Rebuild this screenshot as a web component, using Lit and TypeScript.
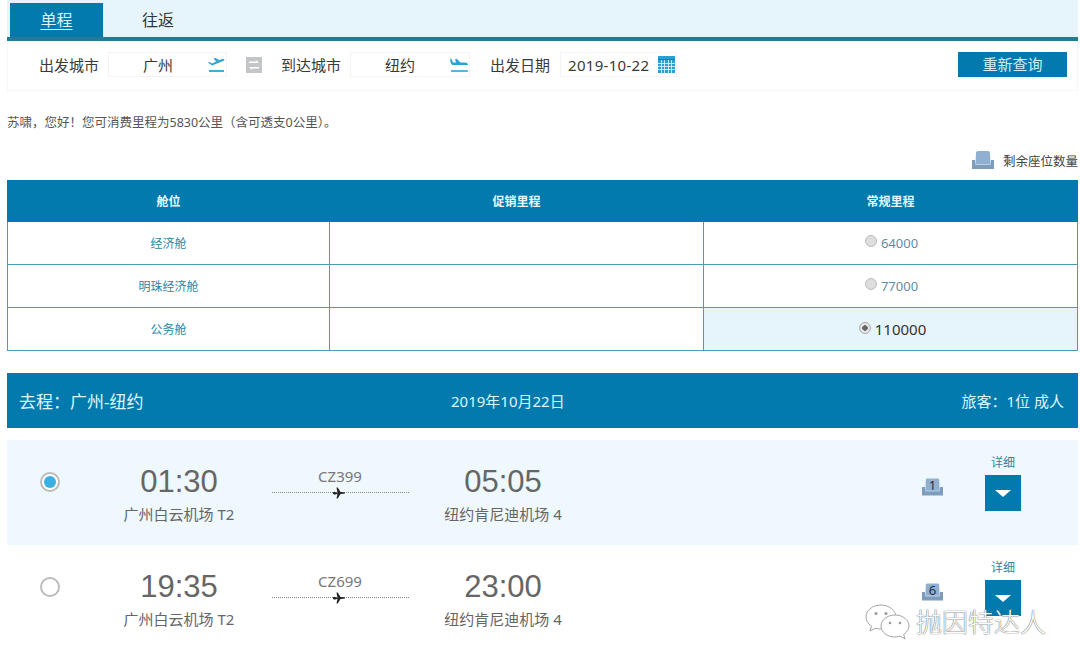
import { LitElement, html, css, svg } from "lit";
import { customElement } from "lit/decorators.js";

const takeoff = svg`<svg class="pic" width="19" height="18" viewBox="0 0 19 18"><path d="M2 15h15" stroke="#2fa3d0" stroke-width="1.800"/><path d="M1 6.500L2.500 6 5 7.500 14 3.500C16 2.600 17.500 3 17.500 3.600 17.500 4.300 16.500 4.800 15 5.500L5 9.500zM6.500 2.500L8.500 2l4 2L9 5.600z" fill="#2fa3d0"/></svg>`;
const landing = svg`<svg class="pic" width="20" height="18" viewBox="0 0 20 18"><path d="M2 15h17" stroke="#2fa3d0" stroke-width="1.600"/><path d="M1 2.500L2.500 3 4 6.500H16C18 6.500 19 7.500 19 9H4C2.500 9 2 8 1.500 6zM7 6.500L6 3h2l3.500 3.500z" fill="#2fa3d0"/></svg>`;
const calendar = svg`<svg width="17" height="17" viewBox="0 0 17 17"><rect width="17" height="17" fill="#2c9fd0"/><path d="M0 3.500h17" stroke="#1c7fab" stroke-width="1"/><path d="M0 7.500h17M0 10.500h17M0 13.500h17M3.500 4v13M6.500 4v13M10.500 4v13M13.500 4v13" stroke="#e8f6fc" stroke-width=".8"/></svg>`;
const swap = svg`<svg width="16" height="16" viewBox="0 0 16 16"><rect width="16" height="16" fill="#c4c5c6"/><path d="M3 4.500h7V3l3 3H3zM13 11.500H6V13l-3-3h10z" fill="#fff"/></svg>`;
const seat = (w: number, h: number) => svg`<svg width="${w}" height="${h}" viewBox="0 0 22 18"><path d="M4 1.500Q4 0 6 0h10q2 0 2 1.500L18.500 13h-15z" fill="#8fb0d0"/><path d="M0 9h3l.5 4.500h15l.5-4.500h3v9H0z" fill="#7e9cbc"/></svg>`;
const plane = svg`<svg class="plane" width="12" height="12" viewBox="0 0 12 12"><path d="M0 5l1 .3L1.600 4.800 4.500 6 3.500 .5h1.200L7.500 5l3 .2c1 .1 1.500.5 1.500.8s-.5.700-1.500.8l-3 .2-2.800 4.500H3.500L4.500 6.800l-2.900.9L1 7.200 0 7z" fill="#222"/></svg>`;
const wechat = svg`<svg width="45" height="36" viewBox="0 0 45 36"><path d="M16 1C7.500 1 1 6.500 1 13c0 3.700 2.200 6.900 5.500 9.100L5 27l5.500-2.700c2 .6 3.500.7 5.500.7 8 0 15-5.500 15-12S24 1 16 1z" fill="#fff" stroke="#a5a5a5" stroke-width="1"/><circle cx="11" cy="9.500" r="1.500" fill="#999"/><circle cx="21" cy="9.500" r="1.500" fill="#999"/><path d="M30 11c-8 0-14 5-14 11s6 11 14 11c2 0 3.500-.3 5-.9l5 2.900-1.300-4.600C42 28 44 25.200 44 22c0-6-6-11-14-11z" fill="#fff" stroke="#a5a5a5" stroke-width="1"/><circle cx="25" cy="19" r="1.300" fill="#999"/><circle cx="35" cy="19" r="1.300" fill="#999"/></svg>`;

const flights = [
  { dep: "01:30", code: "CZ399", arr: "05:05", seats: "1", on: true },
  { dep: "19:35", code: "CZ699", arr: "23:00", seats: "6", on: false },
];

const cabins = [
  { name: "经济舱", miles: "64000", on: false },
  { name: "明珠经济舱", miles: "77000", on: false },
  { name: "公务舱", miles: "110000", on: true },
];

@customElement("app-root")
export class AppRoot extends LitElement {
  static styles = css`
    :host { display: block; position: relative; width: 1080px; height: 670px; overflow: hidden; background: #fff;
      font-family: "Noto Sans", "Noto Sans CJK SC", sans-serif; color: #3a3a3a; }
    .page { margin-left: 7px; width: 1071px; }
    .tabs { display: flex; height: 37px; padding: 3px 0 0 3px; box-sizing: border-box; background: #e6f5fb; }
    .tab { width: 93px; height: 34px; line-height: 34px; text-align: center; font-size: 16px; color: #333; }
    .tab.active { background: #037aae; color: #d9f3ff; text-decoration: underline; text-underline-offset: 3px; }
    .tab.second { width: 110px; }
    .rule { height: 4px; background: #267a98; }
    .form { display: flex; align-items: center; height: 50px; box-sizing: border-box; padding: 0 0 2px 31px;
      border: 1px solid #f4f6f7; border-top: 0; font-size: 15px; }
    .label { width: 60px; margin-right: 9px; white-space: nowrap; }
    .field { display: flex; align-items: center; height: 25px; box-sizing: border-box; border: 1px solid #f1f3f4; }
    .city { width: 119px; }
    .city.dest { width: 120px; margin-right: 20px; }
    .city span { width: 98px; text-align: center; }
    .date { width: 117px; margin-left: 1px; padding: 0 1px 0 7px; letter-spacing: .3px; justify-content: space-between; }
    .pic { flex: none; }
    .swap { display: flex; margin: 0 19px; }
    .requery { margin-left: auto; margin-right: 10px; width: 109px; height: 25px; line-height: 24px; text-align: center;
      background: #037aae; color: #cfeefb; font-size: 15px; }
    .greet { margin: 23px 0 0; font-size: 12.500px; line-height: 18px; color: #555; white-space: nowrap; }
    .legend { display: flex; justify-content: flex-end; align-items: center; gap: 9px; margin-top: 18px; height: 20px;
      font-size: 12.500px; color: #444; white-space: nowrap; }
    table { width: 1071px; margin-top: 10px; border-collapse: collapse; table-layout: fixed; font-size: 12px; }
    th { height: 40px; padding: 0; background: #037aae; border: 1px solid #037aae; color: #e8f7fd; font-weight: 700; }
    td { height: 42px; padding: 0; border: 1px solid #4a9db3; text-align: center; color: #2c86a6; }
    td.sel { background: #e6f5fb; color: #333; font-size: 15px; padding-left: 4px; }
    td.opt { font-size: 13px; color: #5d8ea8; padding-left: 2px; }
    .rad { display: inline-block; width: 12px; height: 12px; border-radius: 50%; margin-right: 4px; vertical-align: 1px;
      box-sizing: border-box; border: 1px solid #bdbdbd; background: #dedede; }
    .rad.on { background: radial-gradient(circle, #666 0 2.500px, #e6e6e6 3px); border-color: #aaa; }
    .banner { display: flex; align-items: center; height: 55px; margin-top: 22px; padding: 0 14px 0 12px;
      background: #037aae; color: #dff5fd; white-space: nowrap; }
    .route { width: 432px; font-size: 17px; }
    .day { font-size: 15px; }
    .pax { margin-left: auto; font-size: 15px; }
    .flights { margin-top: 12px; }
    .flight { display: grid; grid-template-columns: 86px 172px 150px 176px 1fr 63px 36px;
      height: 105px; box-sizing: border-box; padding: 14px 57px 0 0; align-items: start; color: #666; }
    .flight.on { background: #eff8fc; }
    .pick { justify-self: center; width: 20px; height: 20px; margin-top: 18px; box-sizing: border-box; border-radius: 50%;
      border: 2px solid #bbb; background: #fff; display: flex; align-items: center; justify-content: center; }
    .pick i { width: 12px; height: 12px; border-radius: 50%; background: #3ab0e2; }
    .point { margin-top: 10px; text-align: center; }
    .time { font-family: "Liberation Sans", sans-serif; font-size: 31px; line-height: 36px; }
    .place { margin-top: 4px; font-size: 15px; line-height: 20px; white-space: nowrap; }
    .leg { margin-top: 12px; display: flex; flex-direction: column; align-items: center; font-size: 15px; line-height: 20px; color: #777; }
    .line { position: relative; width: 137px; margin-top: 6px; border-top: 1px dotted #888; }
    .plane { position: absolute; left: 61px; top: -6px; }
    .left { position: relative; width: 21px; height: 18px; margin-top: 24px; }
    .left b { position: absolute; left: 0; right: 0; top: 0; text-align: center; font-size: 13px; font-weight: 400; line-height: 15px; color: #1b2c55; }
    .more { display: flex; flex-direction: column; align-items: center; margin-top: 1px; font-size: 12px; line-height: 16px; color: #2c86a6; }
    .more div { display: flex; align-items: center; justify-content: center; width: 36px; height: 36px; margin-top: 4px; background: #037aae; }
    .more i { width: 0; height: 0; border-style: solid; border-width: 7px 8px 0; border-color: #fff transparent transparent; }
    .mark { position: absolute; left: 865px; top: 604px; display: flex; align-items: center; gap: 6px; white-space: nowrap; }
    .mark span { font-size: 26px; font-weight: 300; color: #fff; line-height: 36px; text-shadow: 0 0 1px #666, 0 0 1px #666; }
  `;

  render() {
    return html`
      <div class="page">
        <div class="tabs">
          <div class="tab active">单程</div>
          <div class="tab second">往返</div>
        </div>
        <div class="rule"></div>
        <div class="form">
          <div class="label">出发城市</div>
          <div class="field city"><span>广州</span>${takeoff}</div>
          <div class="swap">${swap}</div>
          <div class="label">到达城市</div>
          <div class="field city dest"><span>纽约</span>${landing}</div>
          <div class="label">出发日期</div>
          <div class="field date">2019-10-22 ${calendar}</div>
          <div class="requery">重新查询</div>
        </div>
        <p class="greet">苏啸，您好！您可消费里程为5830公里（含可透支0公里）。</p>
        <div class="legend">${seat(22, 18)}<span>剩余座位数量</span></div>
        <table>
          <colgroup><col style="width:322px" /><col style="width:374px" /><col /></colgroup>
          <thead><tr><th>舱位</th><th>促销里程</th><th>常规里程</th></tr></thead>
          <tbody>
            ${cabins.map(
              (c) => html`<tr>
                <td>${c.name}</td>
                <td></td>
                <td class=${c.on ? "sel" : "opt"}><span class="rad ${c.on ? "on" : ""}"></span>${c.miles}</td>
              </tr>`
            )}
          </tbody>
        </table>
        <div class="banner">
          <div class="route">去程：广州-纽约</div>
          <div class="day">2019年10月22日</div>
          <div class="pax">旅客：1位 成人</div>
        </div>
        <div class="flights">
          ${flights.map(
            (f) => html`<div class="flight ${f.on ? "on" : ""}">
              <div class="pick">${f.on ? html`<i></i>` : ""}</div>
              <div class="point"><div class="time">${f.dep}</div><div class="place">广州白云机场 T2</div></div>
              <div class="leg">${f.code}<div class="line">${plane}</div></div>
              <div class="point"><div class="time">${f.arr}</div><div class="place">纽约肯尼迪机场 4</div></div>
              <span></span>
              <div class="left">${seat(21, 18)}<b>${f.seats}</b></div>
              <div class="more">详细<div><i></i></div></div>
            </div>`
          )}
        </div>
      </div>
      <div class="mark">${wechat}<span>抛因特达人</span></div>
    `;
  }
}
